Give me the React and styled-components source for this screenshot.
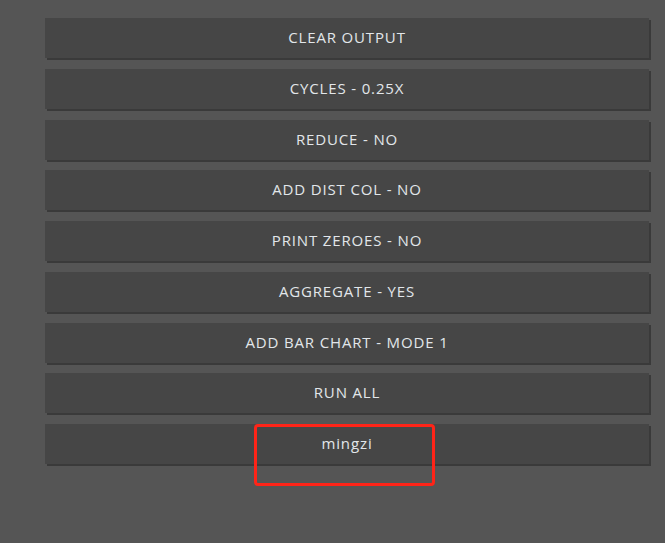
import React from "react";
import styled, { createGlobalStyle } from "styled-components";

const Global = createGlobalStyle`
  html, body { margin: 0; padding: 0; background: #555555; }
  body { font-family: "Open Sans", "Liberation Sans", sans-serif; }
`;

const Page = styled.div`
  position: relative;
  min-height: 543px;
  padding: 18px 16px 0 45px;
  box-sizing: border-box;
  display: flex;
  flex-direction: column;
  gap: 10.75px;
`;

const Button = styled.button`
  height: 40px;
  width: 604px;
  border: none;
  background: #464646;
  box-shadow: 2px 2px 0 #3a3a3a;
  color: #e2e6ea;
  font-family: "Open Sans", "Liberation Sans", sans-serif;
  font-size: 15px;
  letter-spacing: ${(p) => (p.$raw ? "0.9px" : "0.85px")};
  line-height: 20px;
  text-transform: ${(p) => (p.$raw ? "none" : "uppercase")};
  padding: 0 0 2px 0;
  display: flex;
  align-items: center;
  justify-content: center;
  cursor: pointer;
`;

const Highlight = styled.div`
  position: absolute;
  left: 254px;
  top: 424px;
  width: 181px;
  height: 62px;
  box-sizing: border-box;
  border: 3.5px solid #ff2418;
  border-radius: 4px;
  pointer-events: none;
`;

const labels = [
  "CLEAR OUTPUT",
  "CYCLES - 0.25X",
  "REDUCE - NO",
  "ADD DIST COL - NO",
  "PRINT ZEROES - NO",
  "AGGREGATE - YES",
  "ADD BAR CHART - MODE 1",
  "RUN ALL",
];

export default function App() {
  return (
    <>
      <Global />
      <Page>
        {labels.map((l) => (
          <Button key={l}>{l}</Button>
        ))}
        <Button $raw>mingzi</Button>
        <Highlight />
      </Page>
    </>
  );
}
